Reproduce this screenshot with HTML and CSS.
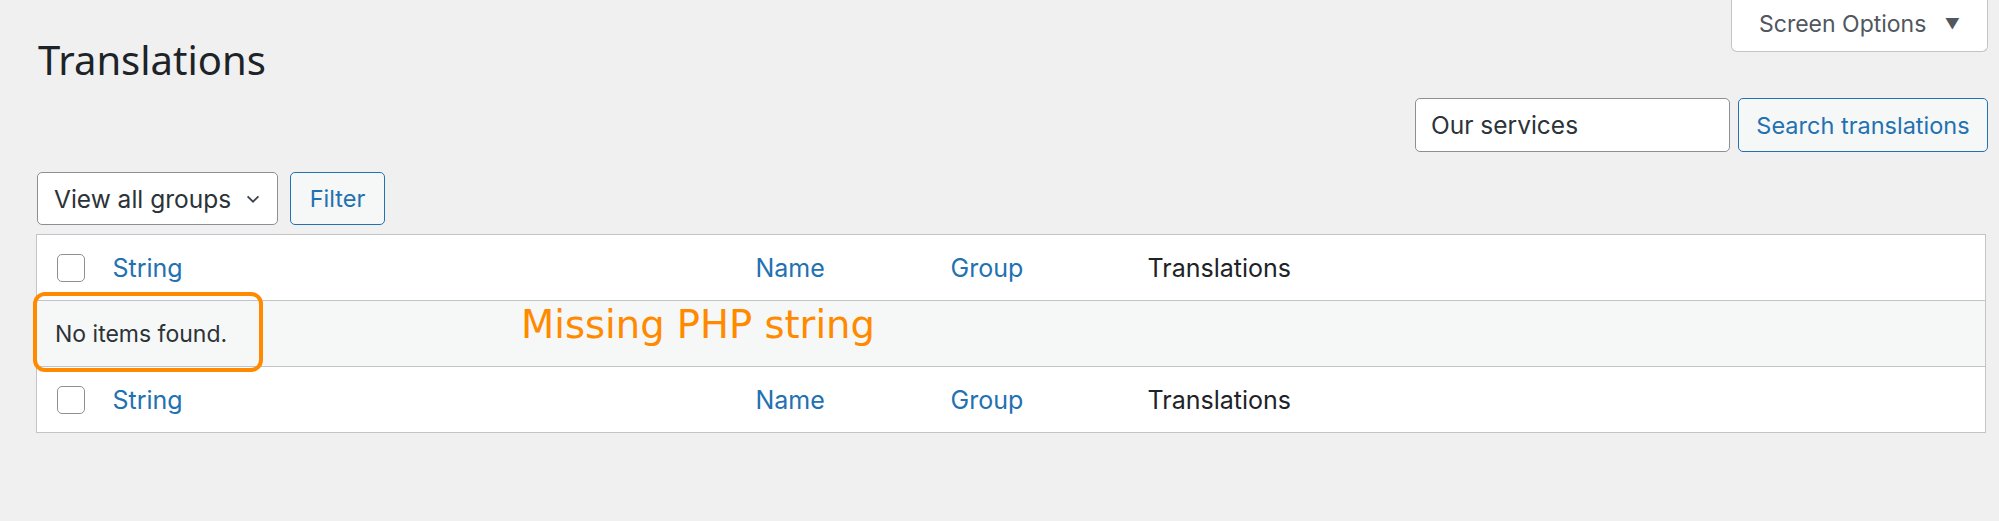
FILE: index.html
```html
<!DOCTYPE html>
<html lang="en">
<head>
    <meta charset="UTF-8">
    <title>Translations</title>
    <link rel="stylesheet" href="styles.css">
</head>
<body>
    <div class="wrap">
        <!-- Cabeçalho: título e aba Screen Options -->
        <div class="top-row">
            <h1 class="page-title">Translations</h1>
            <button class="screen-options">Screen Options <span class="arrow">&#9660;</span></button>
        </div>

        <!-- Busca -->
        <form class="search-box">
            <input type="text" class="search-input" value="Our services">
            <button type="button" class="btn">Search translations</button>
        </form>

        <!-- Filtro -->
        <div class="tablenav">
            <div class="select">
                <span>View all groups</span>
                <svg width="18" height="18" viewBox="0 0 20 20"><path d="M4 7l6 6 6-6" fill="none" stroke="#3c434a" stroke-width="2"/></svg>
            </div>
            <button type="button" class="btn">Filter</button>
        </div>

        <!-- Tabela -->
        <table class="list-table">
            <colgroup>
                <col class="col-check">
                <col class="col-string">
                <col class="col-name">
                <col class="col-group">
                <col>
            </colgroup>
            <thead>
                <tr>
                    <td class="check"><span class="checkbox"></span></td>
                    <th><a href="#">String</a></th>
                    <th><a href="#">Name</a></th>
                    <th><a href="#">Group</a></th>
                    <th>Translations</th>
                </tr>
            </thead>
            <tbody>
                <tr class="no-items">
                    <td colspan="5">
                        <div class="note">
                            No items found.
                            <span class="highlight"></span>
                            <span class="callout">Missing PHP string</span>
                        </div>
                    </td>
                </tr>
            </tbody>
            <tfoot>
                <tr>
                    <td class="check"><span class="checkbox"></span></td>
                    <th><a href="#">String</a></th>
                    <th><a href="#">Name</a></th>
                    <th><a href="#">Group</a></th>
                    <th>Translations</th>
                </tr>
            </tfoot>
        </table>
    </div>
</body>
</html>
```
FILE: styles.css
```css
body {
    margin: 0;
    background-color: #f0f0f1;
    font-family: Inter, "Noto Sans", sans-serif;
    font-size: 23px;
    color: #2c3338;
}
.wrap {
    padding: 0 13px 0 36px;
}
.top-row {
    display: flex;
    justify-content: space-between;
    align-items: flex-start;
}
.page-title {
    margin: 34px 0 0 2px;
    font-family: "Noto Sans", sans-serif;
    font-weight: 400;
    font-size: 40px;
    line-height: 52px;
    color: #1d2327;
}
.screen-options {
    height: 52px;
    width: 257px;
    margin-right: -2px;
    background: #fff;
    border: 1px solid #c3c4c7;
    border-top: none;
    border-radius: 0 0 6px 6px;
    font-family: Inter, sans-serif;
    font-size: 23px;
    color: #50575e;
    padding: 0 0 4px 0;
}
.screen-options .arrow {
    font-size: 15px;
    margin-left: 12px;
    vertical-align: 3px;
}
.search-box {
    display: flex;
    justify-content: flex-end;
    gap: 8px;
    margin: 12px -2px 0 0;
}
.search-input {
    width: 315px;
    height: 54px;
    box-sizing: border-box;
    padding: 0 15px;
    border: 1px solid #8c8f94;
    border-radius: 5px;
    font-family: Inter, sans-serif;
    font-size: 24.5px;
    color: #2c3338;
}
.btn {
    height: 54px;
    width: 250px;
    box-sizing: border-box;
    padding: 0;
    background: #f6f7f7;
    border: 1px solid #2271b1;
    border-radius: 5px;
    font-family: Inter, sans-serif;
    font-size: 23.5px;
    color: #2271b1;
}
.tablenav {
    display: flex;
    gap: 12px;
    margin: 20px 0 9px 1px;
}
.select {
    display: flex;
    align-items: center;
    justify-content: space-between;
    width: 241px;
    height: 53px;
    box-sizing: border-box;
    padding: 0 15px 0 16px;
    background: #fff;
    border: 1px solid #8c8f94;
    border-radius: 5px;
    font-size: 24.5px;
    color: #2c3338;
}
.tablenav .btn {
    height: 53px;
    width: 95px;
}
.list-table {
    width: 100%;
    table-layout: fixed;
    border-collapse: collapse;
    background: #fff;
    border: 1px solid #c3c4c7;
}
.col-check { width: 76px; }
.col-string { width: 643px; }
.col-name { width: 195px; }
.col-group { width: 197px; }
.list-table th,
.list-table td {
    height: 65px;
    padding: 0;
    text-align: left;
    font-weight: 400;
    font-size: 25px;
    color: #1d2327;
}
.list-table thead tr {
    border-bottom: 1px solid #c3c4c7;
}
.list-table tfoot tr {
    border-top: 1px solid #c3c4c7;
}
.list-table a {
    color: #2271b1;
    text-decoration: none;
}
.check {
    padding-left: 20px !important;
}
.checkbox {
    display: block;
    width: 26px;
    height: 26px;
    border: 1.5px solid #8c8f94;
    border-radius: 5px;
    background: #fff;
}
.list-table .no-items td {
    background: #f6f7f7;
    font-size: 23px;
    color: #2c3338;
}
.note {
    position: relative;
    padding-left: 18px;
}
.highlight {
    position: absolute;
    left: -4px;
    top: -28px;
    width: 222px;
    height: 72px;
    border: 4px solid #ff8a00;
    border-radius: 12px;
}
.callout {
    position: absolute;
    left: 484px;
    top: -14px;
    font-family: "DejaVu Sans", sans-serif;
    font-size: 38.5px;
    line-height: 38px;
    color: #ff8a00;
    white-space: nowrap;
}
```
